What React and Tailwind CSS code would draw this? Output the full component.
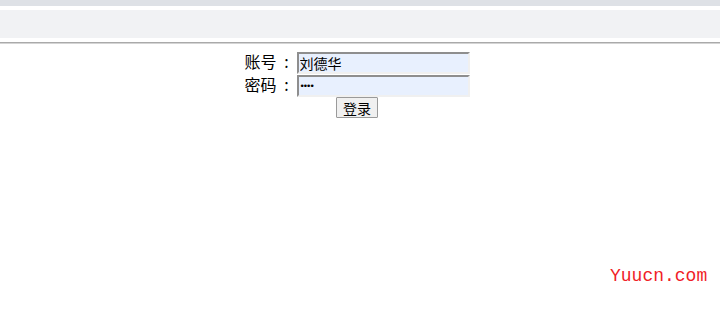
export default function App() {
  return (
    <div className="relative w-[720px] h-[332px] bg-white overflow-hidden font-['Noto_Sans_CJK_SC',sans-serif]">
      <div className="h-[6px] bg-[#dee1e6]" />
      <div className="h-[4px] bg-white" />
      <div className="h-[28px] bg-[#f1f2f4]" />
      <div className="h-[4px] bg-white" />
      <div className="h-[2px] bg-[#aaaaaa] border-b border-[#d4d4d4]" />

      <div className="flex flex-col items-center pt-[8px] mr-[6px]">
        <div className="flex items-start h-[23px]">
          <span className="text-[16px] leading-[18px] text-black">账号</span>
          <span className="text-[16px] leading-[18px] text-black w-[20px] text-center">:</span>
          <input
            defaultValue="刘德华"
            className="w-[173px] h-[22px] bg-[#e8f0fe] border-2 border-t-[#8e8e8e] border-l-[#8e8e8e] border-r-[#f0f0f0] border-b-[#f0f0f0] px-[1px] text-[14px] text-black outline-none font-['Noto_Sans_CJK_SC',sans-serif]"
          />
        </div>
        <div className="flex items-start h-[23px]">
          <span className="text-[16px] leading-[18px] text-black">密码</span>
          <span className="text-[16px] leading-[18px] text-black w-[20px] text-center">:</span>
          <input
            type="password"
            defaultValue="1234"
            className="w-[173px] h-[22px] bg-[#e8f0fe] border-2 border-t-[#8e8e8e] border-l-[#8e8e8e] border-r-[#f0f0f0] border-b-[#f0f0f0] px-[1px] text-[9px] tracking-[-2px] text-black outline-none font-['DejaVu_Sans',sans-serif]"
          />
        </div>
        <button className="mt-[-1px] w-[42px] h-[21px] bg-[#f0f0f0] border border-[#9a9a9a] rounded-[1px] text-[14px] leading-none text-black">
          登录
        </button>
      </div>

      <div className="absolute left-[610px] top-[264px] text-[18px] leading-[24px] text-[#f01d27] font-['Liberation_Mono',monospace]">
        Yuucn.com
      </div>
    </div>
  );
}
